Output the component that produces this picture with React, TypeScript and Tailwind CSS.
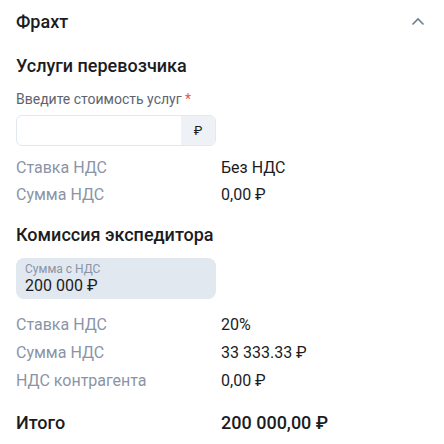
import React from "react";

function Row({ label, value, h }: { label: string; value: string; h: string }) {
  return (
    <div className={"flex items-center " + h}>
      <div className="w-[205px] text-[#8a94a6]">{label}</div>
      <div className="text-[#1c1c1e]">{value}</div>
    </div>
  );
}

export default function App() {
  return (
    <div
      className="w-[444px] h-[444px] bg-white px-4 text-[16px] text-[#1c1c1e]"
      style={{ fontFamily: "Roboto, 'Noto Sans', sans-serif" }}
    >
      <div className="flex h-[42px] items-center justify-between">
        <div className="text-[18px] font-medium">Фрахт</div>
        <svg width="14" height="9" viewBox="0 0 14 9" className="mr-[3px]">
          <path d="M1.5 7.5 L7 2 L12.5 7.5" fill="none" stroke="#6b7f90" strokeWidth="1.6" />
        </svg>
      </div>
      <div className="mt-[12px] text-[18px] font-medium leading-[24px]">Услуги перевозчика</div>
      <div className="mt-[12px] text-[14px] leading-[18px] text-[#5d6470]">
        Введите стоимость услуг <span className="text-[#f05252]">*</span>
      </div>
      <div className="mt-[7px] flex h-[31px] w-[200px] overflow-hidden rounded-[6px] border border-[#e2e8f0]">
        <div className="flex-1" />
        <div className="flex w-[34px] items-center justify-center bg-[#eef2f6] text-[13px] text-[#1c1c1e]">₽</div>
      </div>
      <div className="mt-[8px]">
        <Row h="h-[27px]" label="Ставка НДС" value="Без НДС" />
        <Row h="h-[27px]" label="Сумма НДС" value="0,00 ₽" />
      </div>
      <div className="mt-[15px] text-[18px] font-medium leading-[24px]">Комиссия экспедитора</div>
      <div className="mt-[11px] flex h-[41px] w-[200px] flex-col justify-center rounded-[8px] bg-[#e2e8f0] px-[9px]">
        <div className="text-[12px] leading-[14px] text-[#8a94a6]">Сумма с НДС</div>
        <div className="text-[16px] leading-[19px]">200 000 ₽</div>
      </div>
      <div className="mt-[12px]">
        <Row h="h-[28px]" label="Ставка НДС" value="20%" />
        <Row h="h-[28px]" label="Сумма НДС" value="33 333.33 ₽" />
        <Row h="h-[28px]" label="НДС контрагента" value="0,00 ₽" />
      </div>
      <div className="mt-[13px] flex h-[28px] items-center text-[18px] font-medium">
        <div className="w-[205px]">Итого</div>
        <div>200 000,00 ₽</div>
      </div>
    </div>
  );
}
